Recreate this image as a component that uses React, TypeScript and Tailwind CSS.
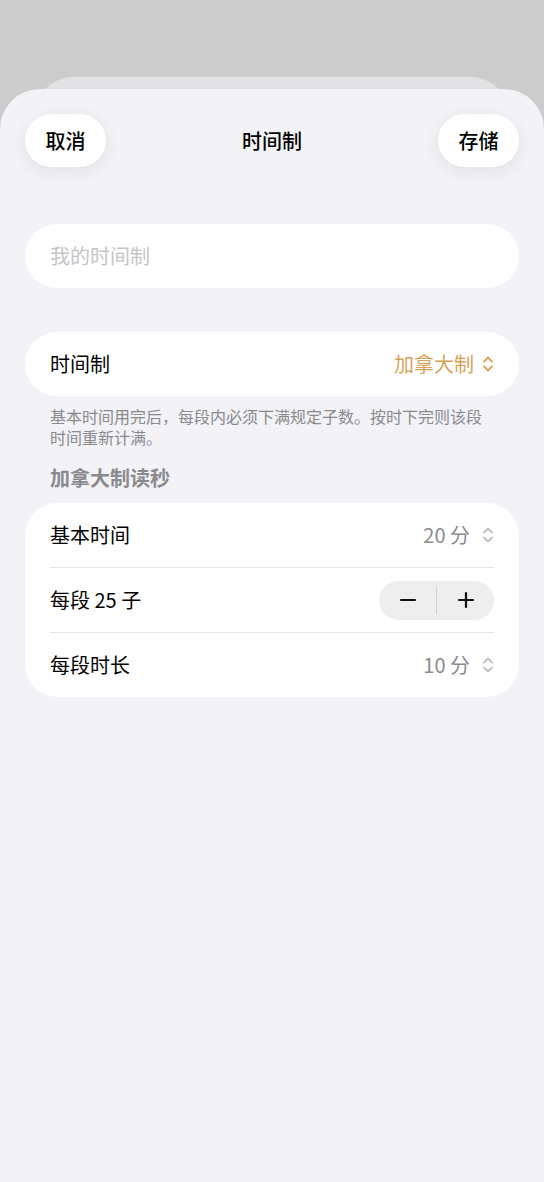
import React from "react";

const font = { fontFamily: '"Noto Sans CJK SC", "Noto Sans", sans-serif' };

function UpDown({ color }: { color: string }) {
  return (
    <svg width="12" height="18" viewBox="0 0 12 18" fill="none" stroke={color} strokeWidth="1.8" strokeLinecap="round" strokeLinejoin="round">
      <path d="M2 6.5 L6 2.5 L10 6.5" />
      <path d="M2 11.5 L6 15.5 L10 11.5" />
    </svg>
  );
}

function ValueRow({ label, value }: { label: string; value: string }) {
  return (
    <div className="h-[64px] flex items-center justify-between">
      <span className="text-[20px] text-black">{label}</span>
      <div className="flex items-center gap-[12px]">
        <span className="text-[20px] text-[#8a8a8e]">{value}</span>
        <UpDown color="#c0c0c4" />
      </div>
    </div>
  );
}

export default function App() {
  return (
    <div className="w-full min-h-[1182px] bg-[#cccccc] flex flex-col pt-[77px]" style={font}>
      <div className="mx-[35px] h-[60px] -mb-[48px] rounded-t-[38px] bg-[#e2e2e4]" />
      <div className="relative flex-1 bg-[#f2f2f7] rounded-t-[40px] px-[25px] pb-10">
        <div className="pt-[25px] flex items-center justify-between">
          <button className="w-[81px] h-[53px] rounded-full bg-white shadow-[0_4px_18px_rgba(0,0,0,0.08)] text-[20px] font-medium text-black">
            取消
          </button>
          <span className="text-[20px] font-medium text-black">时间制</span>
          <button className="w-[81px] h-[53px] rounded-full bg-white shadow-[0_4px_18px_rgba(0,0,0,0.08)] text-[20px] font-medium text-black">
            存储
          </button>
        </div>

        <div className="mt-[57px] h-[64px] rounded-full bg-white px-[25px] flex items-center">
          <span className="text-[20px] text-[#c5c5c8]">我的时间制</span>
        </div>

        <div className="mt-[44px] h-[64px] rounded-full bg-white px-[25px] flex items-center justify-between">
          <span className="text-[20px] text-black">时间制</span>
          <div className="flex items-center gap-[8px]">
            <span className="text-[20px] text-[#d6a35b]">加拿大制</span>
            <UpDown color="#d6a35b" />
          </div>
        </div>

        <p className="mt-[10px] px-[25px] text-[16px] leading-[21px] text-[#8a8a8e]">
          基本时间用完后，每段内必须下满规定子数。按时下完则该段时间重新计满。
        </p>

        <div className="mt-[17px] px-[25px] text-[20px] leading-[26px] font-semibold text-[#8a8a8e]">
          加拿大制读秒
        </div>

        <div className="mt-[12px] rounded-[32px] bg-white px-[25px]">
          <ValueRow label="基本时间" value="20 分" />
          <div className="h-px bg-[#e5e5ea]" />
          <div className="h-[64px] flex items-center justify-between">
            <span className="text-[20px] text-black">每段 25 子</span>
            <div className="w-[115px] h-[39px] rounded-full bg-[#eeeeef] flex items-center">
              <div className="flex-1 flex items-center justify-center">
                <svg width="18" height="18" viewBox="0 0 18 18" stroke="#111" strokeWidth="2.2" strokeLinecap="round">
                  <path d="M2 9 H16" />
                </svg>
              </div>
              <div className="w-px h-[27px] bg-[#d1d1d6]" />
              <div className="flex-1 flex items-center justify-center">
                <svg width="18" height="18" viewBox="0 0 18 18" stroke="#111" strokeWidth="2.2" strokeLinecap="round">
                  <path d="M2 9 H16 M9 2 V16" />
                </svg>
              </div>
            </div>
          </div>
          <div className="h-px bg-[#e5e5ea]" />
          <ValueRow label="每段时长" value="10 分" />
        </div>
      </div>
    </div>
  );
}
